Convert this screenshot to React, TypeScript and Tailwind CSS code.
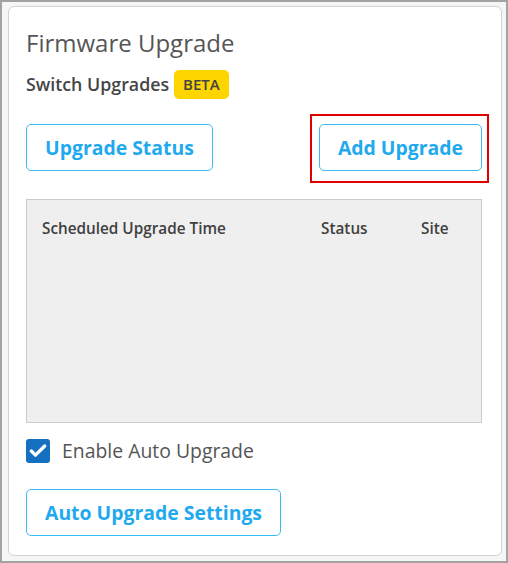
import { Check } from 'lucide-react';

function OutlineButton({ label }: { label: string }) {
  return (
    <button className="h-[47px] px-[18px] rounded-[5px] border border-[#3dbbf3] bg-white text-[19.4px] font-bold text-[#1fa9ef] leading-none">
      {label}
    </button>
  );
}

export default function App() {
  return (
    <div
      className="w-[508px] h-[563px] border-2 border-[#a3a3a3] bg-[#f6f6f6] pt-[4px] pl-[6px] pr-[4px] pb-[5px]"
      style={{ fontFamily: '"Open Sans", "Noto Sans", sans-serif' }}
    >
      <div className="h-full bg-white border border-[#d3d3d3] rounded-[6px] pl-[17px] pr-[19px] pt-[20px]">
        <h1 className="text-[24px] leading-[32px] text-[#555555]">Firmware Upgrade</h1>

        <div className="mt-[11px] flex items-center gap-[5px]">
          <span className="text-[17.8px] font-semibold text-[#454545]">Switch Upgrades</span>
          <span className="h-[29px] px-[9px] rounded-[5px] bg-[#ffd500] flex items-center text-[15px] font-semibold text-[#444444]">
            BETA
          </span>
        </div>

        <div className="mt-[25px] flex justify-between items-start">
          <OutlineButton label="Upgrade Status" />
          <div className="relative">
            <span className="absolute -left-[9px] -top-[10px] -right-[7px] -bottom-[12px] border-2 border-[#e10000] pointer-events-none" />
            <OutlineButton label="Add Upgrade" />
          </div>
        </div>

        <div className="mt-[28px] h-[224px] bg-[#efefef] border border-[#cccccc]">
          <div className="grid grid-cols-[279px_100px_1fr] pl-[15px] pt-[18px] text-[15.3px] font-semibold text-[#3f3f3f] leading-[20px]">
            <span>Scheduled Upgrade Time</span>
            <span>Status</span>
            <span>Site</span>
          </div>
        </div>

        <label className="mt-[16px] flex items-center gap-[12px]">
          <span className="w-[24px] h-[24px] rounded-[3px] bg-[#1570c0] flex items-center justify-center">
            <Check size={20} strokeWidth={4} className="text-white" />
          </span>
          <span className="text-[19.4px] text-[#555555] leading-[24px]">Enable Auto Upgrade</span>
        </label>

        <div className="mt-[26px]">
          <OutlineButton label="Auto Upgrade Settings" />
        </div>
      </div>
    </div>
  );
}
